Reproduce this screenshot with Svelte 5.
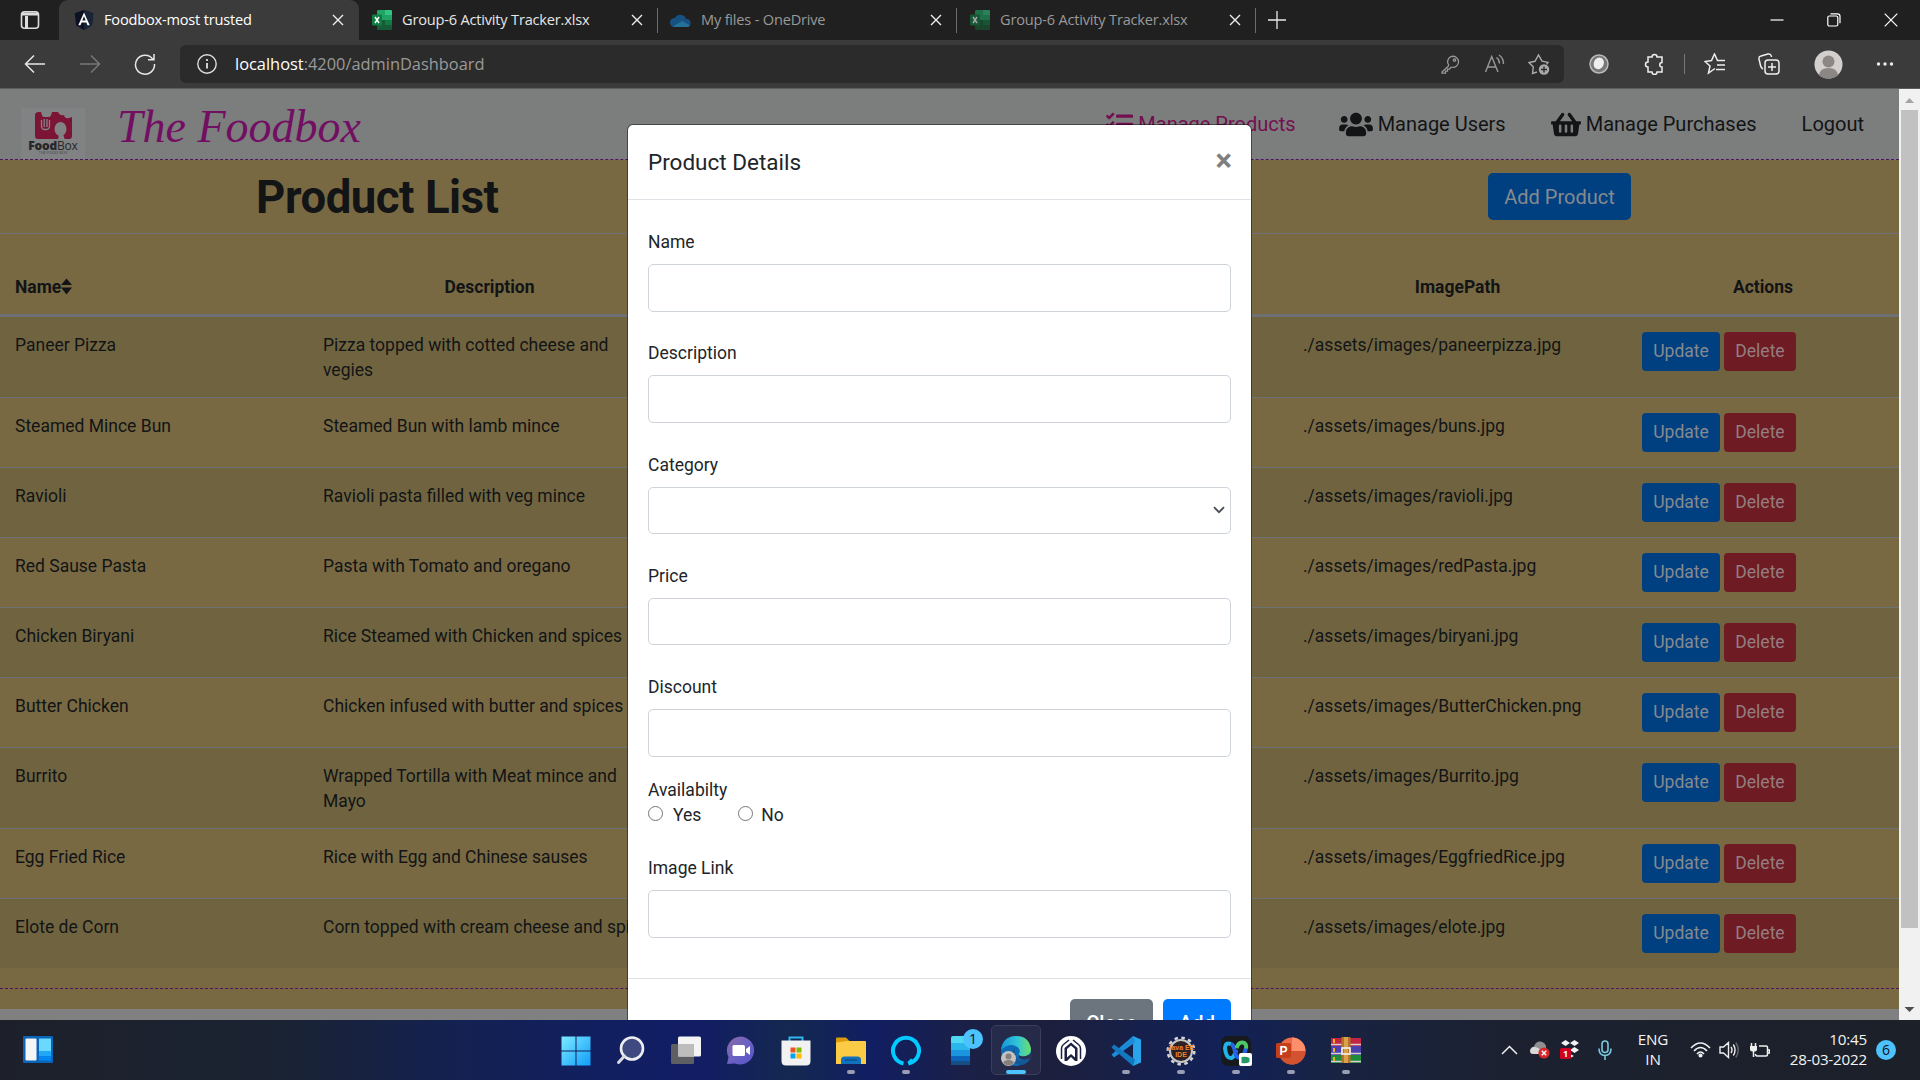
<script>
  const products = [
    ['Paneer Pizza', 'Pizza topped with cotted cheese and vegies', 'paneerpizza.jpg', 80],
    ['Steamed Mince Bun', 'Steamed Bun with lamb mince', 'buns.jpg', 70],
    ['Ravioli', 'Ravioli pasta filled with veg mince', 'ravioli.jpg', 70],
    ['Red Sause Pasta', 'Pasta with Tomato and oregano', 'redPasta.jpg', 70],
    ['Chicken Biryani', 'Rice Steamed with Chicken and spices', 'biryani.jpg', 70],
    ['Butter Chicken', 'Chicken infused with butter and spices', 'ButterChicken.png', 70],
    ['Burrito', 'Wrapped Tortilla with Meat mince and Mayo', 'Burrito.jpg', 81],
    ['Egg Fried Rice', 'Rice with Egg and Chinese sauses', 'EggfriedRice.jpg', 70],
    ['Elote de Corn', 'Corn topped with cream cheese and spice', 'elote.jpg', 70]
  ];
  const fields = ['Name', 'Description', 'Category', 'Price', 'Discount'];
  const tabs = [
    { icon: 'ng', title: 'Foodbox-most trusted', state: 'active' },
    { icon: 'xl', title: 'Group-6 Activity Tracker.xlsx', state: 'lit' },
    { icon: 'od', title: 'My files - OneDrive', state: 'dim' },
    { icon: 'xl', title: 'Group-6 Activity Tracker.xlsx', state: 'dim' }
  ];
  const running = { explorer: 1, alexa: 1, vscode: 1, eclipse: 1, webex: 1, ppt: 1, rar: 1 };
  const apps = ['start', 'search', 'views', 'chat', 'store', 'explorer', 'alexa', 'phone', 'edge', 'home', 'vscode', 'eclipse', 'webex', 'ppt', 'rar'];
</script>

<div class="screen">
  <header class="tabbar">
    <div class="workspace">
      <svg width="20" height="20" viewBox="0 0 20 20" fill="none" stroke="#ddd" stroke-width="1.6"><rect x="1.5" y="1.800" width="17" height="16.400" rx="3" /><path d="M2 4h16M6.500 6v12" stroke-width="3" /></svg>
    </div>
    {#each tabs as t}
      <div class="tab {t.state}">
        <span class="fav">
          {#if t.icon === 'ng'}
            <svg width="20" height="20" viewBox="0 0 20 20"><path d="M10 0l9.300 3.300-1.400 12.300L10 20l-7.900-4.400L.7 3.300z" fill="#0c1124" /><path d="M10 0l9.300 3.300-1.400 12.300L10 20z" fill="#1a2438" /><path d="M10 2.500L4.300 15.300h2.200l1.100-2.800h4.800l1.100 2.800h2.200zM10 6.300l1.700 4.300H8.300z" fill="#fff" fill-rule="evenodd" /></svg>
          {:else if t.icon === 'xl'}
            <svg width="20" height="20" viewBox="0 0 20 18" preserveAspectRatio="none"><path d="M6 0h7v9H5V1z" fill="#21a366" /><path d="M13 0h6q1 0 1 1v3.500h-7z" fill="#33c481" /><path d="M13 4.500h7V9h-7z" fill="#21a366" /><path d="M5 9h8v4.500H5z" fill="#185c37" /><path d="M13 9h7v4.500h-7z" fill="#107c41" /><path d="M5 13.500h15V17q0 1-1 1H6q-1 0-1-1z" fill="#185c37" /><rect y="4" width="10" height="10" rx="1" fill="#107c41" /><path d="M3 6.300l4 5.400M7 6.300l-4 5.400" stroke="#fff" stroke-width="1.500" /></svg>
          {:else}
            <svg width="21" height="14" viewBox="0 0 21 14"><path d="M5 5a6 6 0 0 1 11 1 4 4 0 0 1 1 8H4A4.300 4.300 0 0 1 5 5z" fill="#1272c4" /><path d="M3 13.500L12 8l8 4.500q-1 1.500-3.500 1.500H4z" fill="#28a8ea" /></svg>
          {/if}
        </span>
        <span class="title">{t.title}</span>
        <svg class="x" width="12" height="12" viewBox="0 0 12 12"><path d="M1 1l10 10M11 1L1 11" stroke="#eee" stroke-width="1.400" /></svg>
      </div>
    {/each}
    <svg class="plus" width="18" height="18" viewBox="0 0 18 18"><path d="M9 0v18M0 9h18" stroke="#e8e8e8" stroke-width="1.300" /></svg>
    <div class="window">
      <svg width="14" height="14" viewBox="0 0 14 14"><path d="M.5 7h13" stroke="#fff" stroke-width="1.200" /></svg>
      <svg width="14" height="14" viewBox="0 0 14 14" fill="none" stroke="#fff" stroke-width="1.200"><rect x=".8" y="3" width="10" height="10" rx="1.500" /><path d="M3.500.8h7q2.500 0 2.500 2.500v7" /></svg>
      <svg width="14" height="14" viewBox="0 0 14 14"><path d="M.7.7l12.600 12.600M13.300.7L.7 13.300" stroke="#fff" stroke-width="1.200" /></svg>
    </div>
  </header>

  <div class="toolbar">
    <div class="navs">
      <svg width="22" height="20" viewBox="0 0 22 20" fill="none" stroke="#e8e8e8" stroke-width="1.500"><path d="M21 10H1.500M10 1.500L1.500 10l8.500 8.500" /></svg>
      <svg width="22" height="20" viewBox="0 0 22 20" fill="none" stroke="#777" stroke-width="1.500"><path d="M1 10h19.500M12 1.500l8.500 8.500-8.500 8.500" /></svg>
      <svg width="22" height="22" viewBox="0 0 22 22" fill="none" stroke="#e8e8e8" stroke-width="1.500"><path d="M19 6.500A9.500 9.500 0 1 0 20.500 11M20 1v5.800h-6" /></svg>
    </div>
    <div class="address">
      <svg width="20" height="20" viewBox="0 0 20 20"><circle cx="10" cy="10" r="9.200" fill="none" stroke="#ddd" stroke-width="1.400" /><path d="M10 9v5.500" stroke="#eee" stroke-width="1.700" /><circle cx="10" cy="6" r="1.100" fill="#eee" /></svg>
      <span class="url"><b>localhost</b>:4200/adminDashboard</span>
      <svg width="20" height="20" viewBox="0 0 20 20" fill="none" stroke="#999" stroke-width="1.300"><path d="M9 11.500L2 18v1.200h3.500v-2h2v-2h2l1.800-2.200" /><path d="M9 11.500a5.500 5.500 0 1 1 2.300 1.500" /><circle cx="14.500" cy="6" r="1.200" /></svg>
      <svg width="22" height="20" viewBox="0 0 22 20" fill="none" stroke="#999" stroke-width="1.400"><path d="M2.500 18L8.700 2.500 15 18M4.800 13h8M13.500 3.500q3 2 3 6M16 1q4.500 3 4.500 9" /></svg>
      <svg width="22" height="22" viewBox="0 0 22 22" fill="none" stroke="#aaa" stroke-width="1.400"><path d="M9 19L4.500 20.500 5.300 14 1 9.500l6-1.200L10.500 2 14 8.200l6 1.200-1.500 2" /><circle cx="16" cy="16.500" r="5.200" fill="#aaa" stroke="none" /><path d="M16 13.500v6M13 16.500h6" stroke="#2b2b2b" /></svg>
    </div>
    <div class="tools">
      <svg width="20" height="20" viewBox="0 0 20 20"><circle cx="10" cy="10" r="9" fill="#777" stroke="#bbb" stroke-width="1.500" /><ellipse cx="9.500" cy="9.500" rx="5" ry="6" fill="#eee" transform="rotate(25 10 10)" /></svg>
      <svg width="22" height="22" viewBox="0 0 22 22" fill="none" stroke="#eee" stroke-width="1.500"><path d="M6 4h4a2.500 2.500 0 0 1 5 0h5v5.500a2.200 2.200 0 1 0 0 4.500v5h-5a2.500 2.500 0 0 1-5 0H6v-5a2.500 2.500 0 0 1 0-5z" /></svg>
      <i></i>
      <svg class="favs" width="22" height="22" viewBox="0 0 22 22" fill="none" stroke="#eee" stroke-width="1.500"><path d="M11 15.500L4.500 20 6 13 1 8.500l6.500-1L10.500 1l3 6.500H21M13 12h8M12 16.500h9" /></svg>
      <svg width="22" height="22" viewBox="0 0 22 22" fill="none" stroke="#eee" stroke-width="1.500"><path d="M5 16Q3 15 2.500 12.500L1 6Q.5 3.500 3 3l7-2q3-.5 3.500 3" /><rect x="7" y="7" width="14" height="14" rx="3" /><path d="M14 10v8M10 14h8" /></svg>
      <svg width="29" height="29" viewBox="0 0 29 29"><circle cx="14.500" cy="14.500" r="14" fill="#d2cfcc" /><circle cx="14.500" cy="11.500" r="6" fill="#8c8784" /><path d="M5 25q1-7 9.500-7t9.500 7a14 14 0 0 1-19 0z" fill="#8c8784" /></svg>
      <svg width="18" height="6" viewBox="0 0 18 6" fill="#eee"><circle cx="2.500" cy="3" r="1.700" /><circle cx="9" cy="3" r="1.700" /><circle cx="15.500" cy="3" r="1.700" /></svg>
    </div>
  </div>

  <div class="viewport">
    <main>
      <nav>
        <div class="logo">
          <svg width="64" height="59" viewBox="0 0 64 59"><rect width="64" height="59" fill="#818283" /><path d="M18 4h2q1 5 3 5h5q2 0 3-5h6q2 4 6 3 1 4 5 3l3-1v19q0 3-3 3H17q-3 0-3-3V7q0-3 4-3z" fill="#7c1535" /><path d="M20.500 12v6q0 3.500 3.500 3.500h1q3.500 0 3.500-3.500v-6M23.200 11v8M26 11v8" fill="none" stroke="#818283" stroke-width="1.300" /><ellipse cx="39.500" cy="21" rx="6" ry="7" fill="#818283" /><path d="M38 26h4l2 6h-7z" fill="#818283" /></svg>
          <span><b>Food</b>Box</span><em>THE FOOD BOX</em>
        </div>
        <span class="script">The Foodbox</span>
        <ul>
          <li class="on"><svg width="27" height="27" viewBox="0 0 512 512"><path fill="currentColor" d="M139.610 35.500a12 12 0 0 0-17 0L58.930 98.810l-22.700-22.120a12 12 0 0 0-17 0L3.530 92.410a12 12 0 0 0 0 17l47.590 47.400a12.780 12.780 0 0 0 17.610 0l15.590-15.620L156.520 69a12.090 12.090 0 0 0 .09-17zm0 159.190a12 12 0 0 0-17 0l-63.680 63.720-22.700-22.100a12 12 0 0 0-17 0L3.530 252a12 12 0 0 0 0 17L51 316.500a12.770 12.770 0 0 0 17.600 0l15.700-15.690 72.200-72.220a12 12 0 0 0 .09-16.900zM64 368a48 48 0 1 0 0 96 48 48 0 0 0 0-96zm432 16H208a16 16 0 0 0-16 16v32a16 16 0 0 0 16 16h288a16 16 0 0 0 16-16v-32a16 16 0 0 0-16-16zm0-320H208a16 16 0 0 0-16 16v32a16 16 0 0 0 16 16h288a16 16 0 0 0 16-16V80a16 16 0 0 0-16-16zm0 160H208a16 16 0 0 0-16 16v32a16 16 0 0 0 16 16h288a16 16 0 0 0 16-16v-32a16 16 0 0 0-16-16z" /></svg><span>Manage Products</span></li>
          <li><svg width="34" height="27" viewBox="0 0 640 512"><path fill="currentColor" d="M96 224c35.300 0 64-28.700 64-64s-28.700-64-64-64-64 28.700-64 64 28.700 64 64 64zm448 0c35.300 0 64-28.700 64-64s-28.700-64-64-64-64 28.700-64 64 28.700 64 64 64zm32 32h-64c-17.600 0-33.500 7.100-45.100 18.600 40.300 22.100 68.900 62 75.100 109.400h66c17.700 0 32-14.300 32-32v-32c0-35.300-28.700-64-64-64zm-256 0c61.900 0 112-50.100 112-112S381.900 32 320 32 208 82.100 208 144s50.100 112 112 112zm76.800 32h-8.300c-20.800 10-43.900 16-68.500 16s-47.600-6-68.500-16h-8.300C179.600 288 128 339.600 128 403.200V432c0 26.500 21.500 48 48 48h288c26.500 0 48-21.500 48-48v-28.800c0-63.600-51.600-115.200-115.200-115.200zm-223.700-13.400C161.500 263.100 145.600 256 128 256H64c-35.300 0-64 28.700-64 64v32c0 17.700 14.300 32 32 32h65.900c6.300-47.400 34.900-87.300 75.200-109.400z" /></svg><span>Manage Users</span></li>
          <li><svg width="30" height="27" viewBox="0 0 576 512"><path fill="currentColor" d="M576 216v16c0 13.255-10.745 24-24 24h-8l-26.113 182.788C514.509 462.435 494.257 480 470.370 480H105.630c-23.887 0-44.139-17.565-47.518-41.212L32 256h-8c-13.255 0-24-10.745-24-24v-16c0-13.255 10.745-24 24-24h67.341l106.780-146.821c10.395-14.292 30.407-17.453 44.701-7.058 14.293 10.395 17.453 30.408 7.058 44.701L170.477 192h235.046L326.120 82.821c-10.395-14.292-7.234-34.306 7.059-44.701 14.291-10.395 34.306-7.235 44.701 7.058L484.659 192H552c13.255 0 24 10.745 24 24zM312 392V280c0-13.255-10.745-24-24-24s-24 10.745-24 24v112c0 13.255 10.745 24 24 24s24-10.745 24-24zm112 0V280c0-13.255-10.745-24-24-24s-24 10.745-24 24v112c0 13.255 10.745 24 24 24s24-10.745 24-24zm-224 0V280c0-13.255-10.745-24-24-24s-24 10.745-24 24v112c0 13.255 10.745 24 24 24s24-10.745 24-24z" /></svg><span>Manage Purchases</span></li>
          <li><span>Logout</span></li>
        </ul>
      </nav>
      <section>
        <div class="heading"><h1>Product List</h1><button class="add">Add Product</button></div>
        <div class="row head">
          <span class="first">Name<svg width="11" height="17" viewBox="0 0 11 17"><path d="M5.500 0.500L11 7H0zM5.500 16.500L0 9.500h11z" fill="#121416" /></svg></span>
          <span>Description</span><span></span><span>ImagePath</span><span>Actions</span>
        </div>
        {#each products as [name, text, file, h], i}
          <div class="row" class:odd={i % 2 === 0} class:top={i === 0} class:flat={i === products.length - 1} style:height="{h}px">
            <span>{name}</span><span>{text}</span><span></span><span>./assets/images/{file}</span>
            <span class="acts"><button>Update</button><button class="del">Delete</button></span>
          </div>
        {/each}
      </section>
      <footer></footer>
      <div class="below"></div>
    </main>
    <div class="scroll">
      <svg width="21" height="21" viewBox="0 0 21 21"><path d="M6 14l4.500-5 4.500 5z" fill="#a3a3a3" /></svg>
      <div class="thumb"></div>
      <svg width="21" height="21" viewBox="0 0 21 21"><path d="M5.500 8h10l-5 5z" fill="#505050" /></svg>
    </div>

    <div class="modal">
      <div class="mhead"><span>Product Details</span><b>×</b></div>
      <div class="mbody">
        {#each fields as f}
          <div class="field"><span>{f}</span>
            <div class="box">{#if f === 'Category'}<svg width="12" height="8" viewBox="0 0 12 8"><path d="M1 1.200l5 5 5-5" fill="none" stroke="#495057" stroke-width="1.900" /></svg>{/if}</div>
          </div>
        {/each}
        <div class="avail">
          <span>Availabilty</span>
          <div><i></i><span class="yes">Yes</span><i></i><span class="no">No</span></div>
        </div>
        <div class="field last"><span>Image Link</span><div class="box"></div></div>
      </div>
      <div class="mfoot"><button class="close">Close</button><button class="ok">Add</button></div>
    </div>
  </div>

  <div class="taskbar">
    <div class="widgets">
      <svg width="30" height="27" viewBox="0 0 30 27"><rect width="30" height="27" rx="1" fill="#0a64b8" /><rect x="2.500" y="2.500" width="11" height="22" rx="1" fill="#f5f5f5" /><path d="M16 2.500h12V15H16z" fill="#6ad8ff" /><path d="M16 15h12v5H16z" fill="#22a8f8" /><path d="M16 20h12v4.500H16z" fill="#0586ee" /></svg>
    </div>
    <div class="apps">
      {#each apps as a}
        <div class="app" class:current={a === 'edge'}>
          <svg width="32" height="32" viewBox="0 0 32 32">
            {#if a === 'start'}
              <defs><linearGradient id="win" x2="1" y2="1"><stop stop-color="#7cebff" /><stop offset="1" stop-color="#109cfa" /></linearGradient></defs>
              <path d="M1.500 1.500h14v14h-14zM16.500 1.500h14v14h-14zM1.500 16.500h14v14h-14zM16.500 16.500h14v14h-14z" fill="url(#win)" />
            {:else if a === 'search'}
              <circle cx="17" cy="13.500" r="11" fill="#414a80" stroke="#eceef2" stroke-width="2.600" /><path d="M9.500 21L3.500 27.500" stroke="#dadce0" stroke-width="3" stroke-linecap="round" />
            {:else if a === 'views'}
              <rect x="1" y="9" width="23" height="20" rx="1.500" fill="#5e5f62" /><rect x="8" y="1.500" width="23" height="20" rx="1.500" fill="#f4f4f4" /><path d="M8 9h16v12.500H8z" fill="#bdbdbd" />
            {:else if a === 'chat'}
              <defs><linearGradient id="chat" x2="1" y2="1"><stop stop-color="#8f6b9e" /><stop offset=".5" stop-color="#6a62c4" /><stop offset="1" stop-color="#5552c8" /></linearGradient></defs>
              <path d="M16 1.500a14 14 0 1 1-6 27L2 29l1.500-7A14 14 0 0 1 16 1.500z" fill="url(#chat)" /><rect x="7.500" y="10" width="12.500" height="11" rx="1.500" fill="#fff" /><path d="M21 14l4-3v9l-4-3z" fill="#fff" />
            {:else if a === 'store'}
              <path d="M9.500 7V2.500h13V7" fill="none" stroke="#2fb6f0" stroke-width="2" /><path d="M1.500 5.500h29V26q0 4.500-4.500 4.500H6q-4.500 0-4.500-4.500z" fill="#f2f2f2" /><path d="M10.500 12.500h5v5h-5z" fill="#f25022" /><path d="M16.500 12.500h5v5h-5z" fill="#7fba00" /><path d="M10.500 18.500h5v5h-5z" fill="#00a4ef" /><path d="M16.500 18.500h5v5h-5z" fill="#ffb900" />
            {:else if a === 'explorer'}
              <path d="M1 3.500q0-1 1-1h9l3.500 3.500v4H1z" fill="#dd9a0c" /><path d="M1 7.500l11-1.500h18q1 0 1 1v22H1z" fill="#fccb45" /><path d="M6 29v-4q0-3.500 3.500-3.500h13q3.500 0 3.500 3.500v4z" fill="#1171bd" /><path d="M10 25h12" stroke="#0b4f94" stroke-width="1.500" />
            {:else if a === 'alexa'}
              <path d="M13.500 28.500a13 13 0 1 1 5 0q2.500-1.500 4-4" fill="none" stroke="#00caff" stroke-width="4" />
            {:else if a === 'phone'}
              <rect x="6" y="1" width="19" height="29" rx="2" fill="#4ed8f4" /><path d="M6 8h19v7H6z" fill="#2cb7ec" /><path d="M6 15h19v6H6z" fill="#1a95de" /><path d="M6 21h19v5H6z" fill="#0b64b9" /><path d="M6 26h19v4H6z" fill="#164d82" />
            {:else if a === 'edge'}
              <defs><linearGradient id="edge" x2="1"><stop stop-color="#1595dc" /><stop offset=".55" stop-color="#31c5d5" /><stop offset="1" stop-color="#6cdf66" /></linearGradient></defs>
              <circle cx="16" cy="16" r="15" fill="#0c6cb8" /><path d="M1 15Q3 1 16 1t15 13q0 7-8 7.500-5 0-4.500-2 3-4-1-7.500-8-5-16.500 3z" fill="url(#edge)" /><path d="M31 22.500Q27 30 21 30q-9-1-10-9 0-5 4-8-1 7 3 11 5 3 13-1.500z" fill="#145996" /><path d="M18.500 19.500Q22 24 32 18.500v3.500q-8 5-13 1z" fill="#2b2f52" /><circle cx="8.500" cy="23.500" r="7.500" fill="#c4c1be" /><circle cx="8.500" cy="21.500" r="3" fill="#85807d" /><path d="M3 28q1-3 5.500-3t5.500 3q-5 5-11 0z" fill="#85807d" />
            {:else if a === 'home'}
              <circle cx="16" cy="16" r="15" fill="#fff" /><path d="M6.500 24V13.500q0-2.500 2-4L14 5M25.500 24V13.500q0-2.500-2-4L18 5" fill="none" stroke="#1c2140" stroke-width="1.500" /><path d="M16 7.500l6.500 5.500v13h-2.500L16 22l-4 4H9.500V13z" fill="#1c2140" /><path d="M16 10.500l4 3.500v8.500L16 19l-4 3.500V14z" fill="#fff" />
            {:else if a === 'vscode'}
              <path d="M23 1l8 3.500v23L23 31z" fill="#28a4ea" /><path d="M23 1L1.500 19.500 4 22.500 25 7.500z" fill="#1c8bd8" /><path d="M23 31L1.500 12.500 4 9.500l21 15z" fill="#1278c0" />
            {:else if a === 'eclipse'}
              <circle cx="16" cy="16" r="13.300" fill="none" stroke="#d5d5d5" stroke-width="2.500" stroke-dasharray="3.480 3.480" /><circle cx="16" cy="16" r="11" fill="#2c2126" stroke="#c7c7c7" stroke-width="2" /><text x="16" y="14.500" text-anchor="middle" class="ide">Java EE</text><text x="16" y="21.500" text-anchor="middle" class="ide">IDE</text>
            {:else if a === 'webex'}
              <rect x="1" y="1" width="30" height="30" rx="7" fill="#17191c" /><path d="M11 9q-6-2-6 4 1 11 6.500 10 3-1 4.500-8" fill="none" stroke="#20b2ea" stroke-width="4" /><path d="M11 9q3 1 4 8 1.500 7 5.500 5.500 4-2 5.500-9.500" fill="none" stroke="#2463e4" stroke-width="4" /><path d="M16.500 13q2-6 6-5.500 4.500.5 3.500 6" fill="none" stroke="#4fc66a" stroke-width="4" /><rect x="19" y="18" width="13" height="13" rx="2" fill="#fff" /><path d="M21.500 22q5-1 8 1v4q-3 2-8 1z" fill="#269a66" />
            {:else if a === 'ppt'}
              <circle cx="17" cy="16" r="13.500" fill="#ed6c47" /><path d="M17 2.500A13.500 13.500 0 0 1 30.500 16H17z" fill="#ff8f6b" /><path d="M3.500 16h27a13.500 13.500 0 0 1-27 0z" fill="#d35230" /><rect x="1" y="8" width="15" height="15" rx="1.500" fill="#c43e1c" /><text x="8.500" y="20" text-anchor="middle" class="p">P</text>
            {:else}
              <path d="M1 3h30v8H1z" fill="#c22443" /><path d="M1 11h30v9H1z" fill="#4c3fae" /><path d="M1 20h30v8H1z" fill="#1d8b39" /><path d="M1 9.500h30M1 18.500h30M1 26.500h30" stroke="#d8cfd0" stroke-width="1.300" /><path d="M4 4v4M4 13v4M4 22v4" stroke="#e8b31c" stroke-width="2" /><path d="M11.500 2h9v26h-9z" fill="#b5722a" /><path d="M14 2h4v26h-4z" fill="#d9a14a" /><rect x="12" y="13" width="8" height="6" fill="none" stroke="#eee" stroke-width="1.700" />
            {/if}
          </svg>
          {#if a === 'phone'}<span class="badge">1</span>{/if}
          {#if running[a] || a === 'edge'}<span class="dot"></span>{/if}
        </div>
      {/each}
    </div>
    <div class="tray">
      <svg width="17" height="10" viewBox="0 0 17 10"><path d="M1 9l7.500-7.500L16 9" fill="none" stroke="#eee" stroke-width="1.500" /></svg>
      <svg width="21" height="18" viewBox="0 0 21 18"><path d="M5 6a6 6 0 0 1 12 1l3 6H4z" fill="#8f9092" /><path d="M1 10a4 4 0 0 1 5-4q6 1 7 7H4a3 3 0 0 1-3-3z" fill="#d8d8d8" /><circle cx="15" cy="12" r="5.600" fill="#d8262c" /><path d="M12.800 9.800l4.400 4.400M17.200 9.800l-4.400 4.400" stroke="#fff" stroke-width="1.400" /></svg>
      <svg width="20" height="20" viewBox="0 0 20 20"><path d="M5.500 0L10 3 5.500 6 1 3zM14.500 0L19 3l-4.500 3L10 3zM14.500 7L19 10l-4.500 3-4.500-3zM10 14l4 2-4 2z" fill="#f2f2f2" /><rect y="8" width="11" height="11" rx="1.500" fill="#d10022" /><text x="5.500" y="17" text-anchor="middle" class="one">1</text></svg>
      <svg width="14" height="20" viewBox="0 0 14 20" fill="none" stroke="#79c8df" stroke-width="1.600"><rect x="4" y="1" width="6" height="11.500" rx="3" /><path d="M1 8.500q0 7 6 7t6-7M7 15.500V20" /></svg>
      <div class="lang"><span>ENG</span><span>IN</span></div>
      <svg class="wifi" width="21" height="16" viewBox="0 0 21 16" fill="none" stroke="#eee" stroke-width="1.600"><path d="M1 6q9.500-10 19 0M4 9q6.500-7 13 0M7 12q3.500-4 7 0" /><circle cx="10.500" cy="13.500" r="1.300" fill="#eee" /></svg>
      <svg width="20" height="18" viewBox="0 0 20 18" fill="none" stroke="#eee" stroke-width="1.400"><path d="M1 6h3.500l5-4.500v15L4.500 12H1zM12 6q2 3 0 6M14.300 3.500q3.500 5.500 0 11" /><path d="M16.800 1.500q5 7.500 0 15" stroke="#666" /></svg>
      <svg width="21" height="17" viewBox="0 0 21 17" fill="none" stroke="#eee" stroke-width="1.500"><path d="M10 4h7q1.500 0 1.500 1.500v7Q18.500 14 17 14H8q-1.500 0-1.500-2M19 8h1.500v3H19" /><path d="M1 4h7v3.500q0 2-3.500 2T1 7.500z" fill="#eee" stroke="none" /><path d="M2.500 1v3M6.500 1v3M4.500 9v6" /></svg>
      <div class="clock"><span>10:45</span><span>28-03-2022</span></div>
      <div class="count">6</div>
    </div>
  </div>
</div>

<style>
  :global(body) { background: #202020; overflow: hidden; }
  * { box-sizing: border-box; }
  svg { display: block; flex: none; }
  button { border: 0; padding: 0; font-family: inherit; }
  .screen { width: 1920px; height: 1080px; display: flex; flex-direction: column; font-family: Roboto, sans-serif; font-size: 17.5px; line-height: 25px; overflow: hidden; }

  .tabbar { height: 40px; background: #202020; display: flex; flex: none; align-items: center; font-family: "Open Sans", sans-serif; }
  .workspace { width: 59px; padding-left: 20px; }
  .tab { width: 299px; height: 40px; display: flex; align-items: center; padding: 0 15px 0 12px; color: #e6e6e6; font-size: 14.6px; }
  .tab.active { width: 300px; background: #3b3b3b; border-radius: 9px 9px 0 0; color: #fff; padding: 0 15px 0 14px; }
  .tab.dim { color: #999; }
  .tab.dim .fav { opacity: .6; }
  .tab.lit, .tab.dim { position: relative; }
  .tab.lit::after, .tab.dim::after { content: ""; position: absolute; right: 0; top: 8px; width: 1px; height: 25px; background: #6c6c6c; }
  .fav { width: 21px; display: flex; justify-content: center; }
  .title { margin-left: 10px; padding-bottom: 2px; flex: 1; white-space: nowrap; letter-spacing: -.2px; }
  .plus { margin-left: 12px; }
  .window { margin-left: auto; display: flex; gap: 43px; padding-right: 22px; }

  .toolbar { height: 49px; flex: none; background: #3b3b3b; border-bottom: 1px solid #5c5c5c; display: flex; align-items: center; }
  .navs { width: 180px; display: flex; align-items: center; gap: 33px; padding: 0 0 1px 24px; }
  .address { width: 1384px; height: 38px; border-radius: 6px; background: #2b2b2b; display: flex; align-items: center; padding: 0 14px 0 17px; font-family: "Open Sans", sans-serif; gap: 23px; }
  .url { flex: 1; margin-left: -5px; padding-bottom: 2px; color: #9a9a9a; font-size: 16.4px; }
  .url b { font-weight: 400; color: #fff; }
  .tools { flex: 1; display: flex; align-items: center; justify-content: space-between; padding: 0 26px 0 25px; }
  .tools i { width: 1px; height: 20px; background: #777; margin: 0 -14px; }
  .favs { margin-right: -1px; }

  .viewport { height: 931px; flex: none; display: flex; position: relative; overflow: hidden; }
  main { width: 1899px; display: flex; flex-direction: column; color: #121416; }
  nav { height: 71px; flex: none; background: #7c7e7d; border-bottom: 1px dashed #4d1463; display: flex; align-items: center; padding-left: 21px; }
  .logo { width: 64px; height: 51px; margin-top: 19px; display: grid; overflow: hidden; }
  .logo > * { grid-area: 1 / 1; }
  .logo span { font: 12px/14px "Open Sans", sans-serif; align-self: start; justify-self: center; margin-top: 31px; color: #25262a; letter-spacing: -.2px; }
  .logo b { font-weight: 800; }
  .logo em { font: 4px/4px "Open Sans", sans-serif; align-self: start; justify-self: center; margin-top: 43px; color: #444; }
  .script { margin: 6px 0 0 32px; font: italic 46px/50px "Liberation Serif", serif; color: #730f63; width: 250px; white-space: nowrap; }
  nav ul { list-style: none; margin: 0 35px 0 auto; padding: 0; display: flex; font-size: 20px; gap: 45px; }
  nav li { display: flex; align-items: center; gap: 5px; }
  nav .on { color: #730f50; margin-right: -2px; }
  section { background: #786943; height: 828px; flex: none; }
  .heading { height: 73px; display: flex; padding-left: 256px; padding-right: 268px; justify-content: space-between; }
  h1 { margin: 11px 0 0; font-size: 45.5px; line-height: 54px; letter-spacing: -.45px; }
  .add { width: 143px; height: 47px; margin-top: 13px; border-radius: 5px; background: #004080; color: #858a90; font-size: 20px; }
  .row { display: grid; grid-template-columns: 308px 363px 617px 339px 272px; border-top: 1px solid #6e7173; height: 70px; }
  .row > span { padding: 16px 15px 0; }
  .row.odd { background: #706440; }
  .row.top { border-top-color: #706440; }
  .row.top > span { padding-top: 15px; }
  .row.flat { white-space: nowrap; }
  .row.head { height: 84px; border-bottom: 3px solid #6e7173; font-weight: 700; text-align: center; }
  .row.head > span { padding: 41px 15px 0; }
  .row.head .first { display: flex; align-items: flex-start; }
  .first svg { margin-top: 3px; }
  .row .acts { display: flex; gap: 4px; padding: 15px 0 0 15px; }
  .row.top .acts { padding-top: 14px; }
  .acts button { width: 78px; height: 38.5px; border-radius: 4px; background: #004080; color: #858a90; font-size: 17.5px; }
  .acts .del { width: 72px; background: #6e1b23; color: #947e80; }
  footer { height: 21px; flex: none; background: #786943; border-top: 1px dashed #4d1463; }
  .below { flex: 1; background: #808080; }

  .scroll { width: 21px; background: #f1f1f1; display: flex; flex-direction: column; align-items: center; }
  .thumb { width: 17px; height: 818px; background: #c1c1c1; margin-bottom: auto; }

  .modal { position: absolute; left: 627px; top: 35px; width: 625px; height: 1000px; background: #fff; border: 1px solid #00000070; background-clip: padding-box; border-radius: 6px; color: #212529; }
  .mhead { height: 75px; border-bottom: 1px solid #dee2e6; display: flex; justify-content: space-between; padding: 22px 19px 0 20px; font-size: 22.5px; line-height: 30px; }
  .mhead b { font-size: 31px; line-height: 27px; color: #7f7f7f; }
  .mbody { height: 779px; border-bottom: 1px solid #dee2e6; padding: 30px 20px 0; }
  .field { height: 111.3px; display: flex; flex-direction: column; gap: 9px; }
  .box { height: 47.5px; border: 1px solid #ced4da; border-radius: 5px; display: flex; align-items: center; justify-content: flex-end; padding-right: 5px; }
  .avail { margin-top: -8px; height: 78px; }
  .avail div { display: flex; align-items: center; }
  .avail i { width: 15px; height: 15px; border: 1.2px solid #767676; border-radius: 50%; margin-top: -5px; }
  .yes { margin: 0 37px 0 10px; }
  .no { margin-left: 8px; }
  .mfoot { display: flex; justify-content: flex-end; gap: 10px; padding: 20px 20px 0; }
  .mfoot button { height: 47.5px; border-radius: 5px; font-size: 20px; color: #fff; font-weight: 500; }
  .close { width: 83px; background: #6c757d; }
  .ok { width: 68px; background: #007bff; }

  .taskbar { height: 60px; flex: none; display: flex; background: linear-gradient(90deg, #1d202a, #1a2332 280px, #142152 460px, #111f60 600px, #121d64 700px, #14284f 790px, #111e62 870px, #1a2048 960px, #1c1f3c 1050px, #122158 1220px, #192340 1350px, #1b2130 1500px, #1c2029); color: #f3f3f3; font-family: "Open Sans", sans-serif; }
  .widgets { width: 551px; padding: 16px 0 0 23px; }
  .apps { display: flex; padding-top: 5px; }
  .app { width: 50px; height: 50px; margin: 0 5px 0 0; position: relative; display: flex; justify-content: center; padding-top: 9px; border-radius: 5px; border: 1px solid transparent; }
  .current { background: #30355280; border-color: #393e5b; }
  .dot { position: absolute; bottom: 0; left: 20px; width: 8px; height: 4px; border-radius: 2px; background: #999eb5; }
  .current .dot { left: 14px; width: 20px; background: #4cc2ff; }
  .badge { position: absolute; right: 2px; top: 3px; width: 20px; height: 20px; border-radius: 50%; background: #4cc2ff; color: #111; font-size: 14px; line-height: 19px; text-align: center; }
  .ide { font: bold 7px "Liberation Sans", sans-serif; fill: #f08124; }
  .p { font: bold 12px "Liberation Sans", sans-serif; fill: #fff; }
  .one { font: bold 9px "Open Sans", sans-serif; fill: #fff; }
  .tray { flex: 1; display: flex; align-items: center; justify-content: flex-end; padding-right: 24px; font-size: 15.2px; line-height: 20px; }
  .tray svg { margin-right: 10px; }
  .tray svg:nth-child(1) { margin-right: 11px; }
  .tray svg:nth-child(3) { margin-right: 18px; }
  .tray svg:nth-child(4) { margin-right: 26px; }
  .tray .wifi { margin-right: 8px; }
  .lang, .clock { display: flex; flex-direction: column; letter-spacing: -.2px; padding-bottom: 2px; }
  .lang { align-items: center; width: 30px; margin-right: 22px; }
  .clock { width: 87px; align-items: flex-end; margin-right: 9px; white-space: nowrap; }
  .count { width: 20px; height: 20px; border-radius: 50%; background: #4cc2ff; color: #111; text-align: center; font-size: 14px; line-height: 19px; }
</style>
